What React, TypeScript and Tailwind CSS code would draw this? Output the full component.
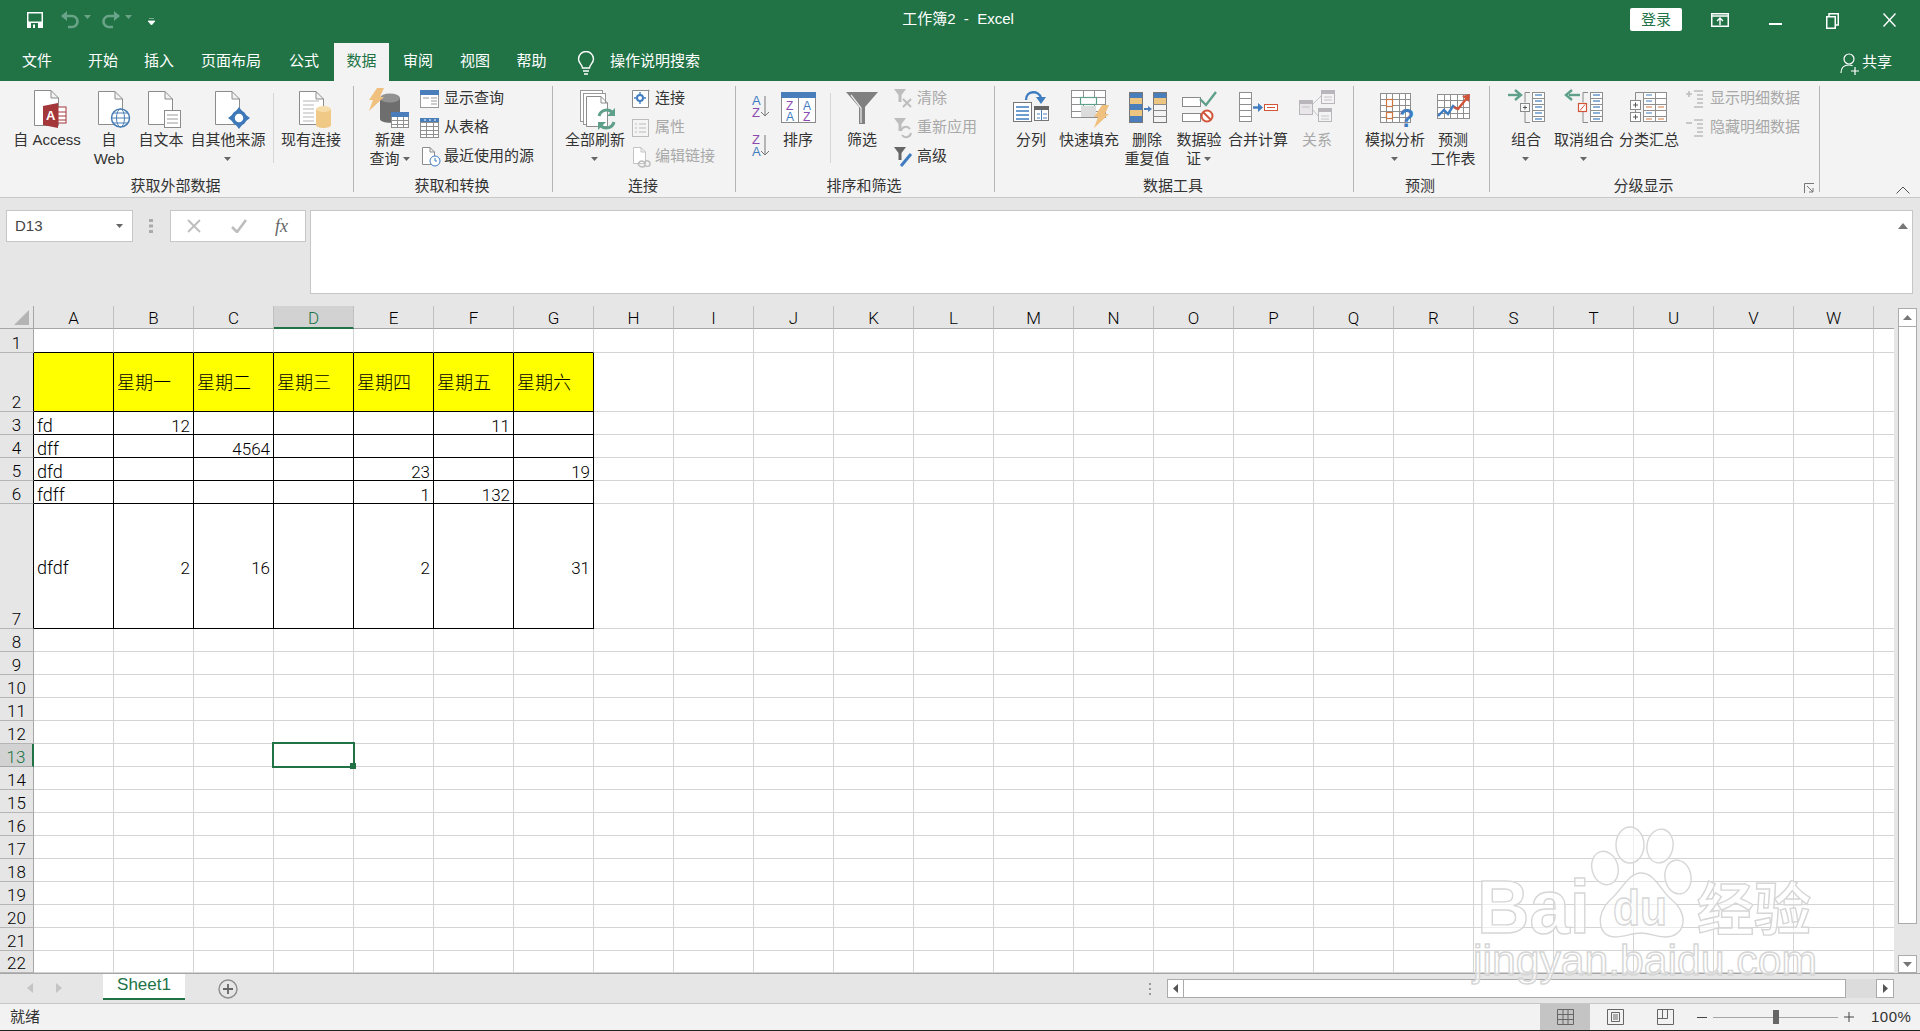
import type { ReactNode } from 'react';

const cjk = "font-['Liberation_Sans','Noto_Sans_CJK_SC',sans-serif]";

const Doc = ({ x, y, w, h, f = 8, s = '#8c8c8c' }: { x: number; y: number; w: number; h: number; f?: number; s?: string }) => (
  <path
    d={`M${x + 0.5} ${y + 0.5}H${x + w - f}L${x + w - 0.5} ${y + f}V${y + h - 0.5}H${x + 0.5}ZM${x + w - f} ${y + 0.5}V${y + f}H${x + w - 0.5}`}
    fill="#fff"
    stroke={s}
  />
);

const Ic = ({ children }: { children: ReactNode }) => (
  <svg width="50" height="44" viewBox="0 0 50 44" className="block overflow-visible">
    {children}
  </svg>
);

const Sm = ({ children }: { children: ReactNode }) => (
  <svg width="20" height="20" viewBox="0 0 20 20" className="block shrink-0 overflow-visible">
    {children}
  </svg>
);

const Caret = ({ className = '' }: { className?: string }) => (
  <svg width="8" height="4" viewBox="0 0 8 4" className={`inline-block ${className}`}>
    <path d="M0 0h7L3.5 4z" fill="#666" />
  </svg>
);

const Big = ({
  className,
  icon,
  lines,
  caret,
  muted,
}: {
  className: string;
  icon: ReactNode;
  lines: string[];
  caret?: 'inline' | 'below';
  muted?: boolean;
}) => (
  <div className={`${className} shrink-0 flex flex-col items-center ${muted ? 'text-[#a8a8a8]' : ''}`}>
    <div className="h-[44px]">{icon}</div>
    {lines.map((l, i) => (
      <div key={i} className="h-[19px] leading-[19px] whitespace-nowrap">
        {l}
        {caret === 'inline' && i === lines.length - 1 && <Caret className="ml-[3px] mb-[2px]" />}
      </div>
    ))}
    {caret === 'below' && (
      <div className="h-[19px] flex items-center">
        <Caret />
      </div>
    )}
  </div>
);

const Small = ({ icon, label, muted, className = '' }: { icon: ReactNode; label: string; muted?: boolean; className?: string }) => (
  <div className={`h-[29px] flex items-center whitespace-nowrap ${muted ? 'text-[#a8a8a8]' : ''} ${className}`}>
    {icon}
    <span className="ml-[4px]">{label}</span>
  </div>
);

const Group = ({
  className,
  label,
  children,
  labelClass = 'pr-[2px]',
}: {
  className: string;
  label: string;
  children: ReactNode;
  labelClass?: string;
}) => (
  <div className={`${className} shrink-0 h-[106px] flex flex-col border-r border-[#b5b5b5]`}>
    <div className="h-[90px] flex">{children}</div>
    <div className={`h-[16px] leading-[20px] text-center ${labelClass}`}>{label}</div>
  </div>
);

const Sep = ({ className }: { className: string }) => <div className={`${className} w-px h-[70px] mt-[7px] bg-[#d6d6d6] shrink-0`} />;

const Bolt = ({ x, y, c = '#efc07e' }: { x: number; y: number; c?: string }) => (
  <path d={`M${x + 8} ${y}h7l-4 9h4L${x} ${y + 23}l4-11H${x}z`} fill={c} />
);

const GridLines = ({ x, y, w, h, nx, ny, s = '#8f8f8f' }: { x: number; y: number; w: number; h: number; nx: number; ny: number; s?: string }) => (
  <g stroke={s} fill="none">
    <rect x={x + 0.5} y={y + 0.5} width={w - 1} height={h - 1} fill="#fff" />
    {Array.from({ length: nx - 1 }, (_, i) => (
      <path key={i} d={`M${Math.round(x + ((i + 1) * w) / nx) + 0.5} ${y}v${h}`} />
    ))}
    {Array.from({ length: ny - 1 }, (_, i) => (
      <path key={i} d={`M${x} ${Math.round(y + ((i + 1) * h) / ny) + 0.5}h${w}`} />
    ))}
  </g>
);

const Funnel = ({ c }: { c: string }) => (
  <path d="M1 0h12L8.5 6v7h-3V6z" fill={c} />
);

const OutlineCol = ({ x }: { x: number }) => (
  <g>
    <GridLines x={x} y={6} w={13} h={30} nx={1} ny={5} />
    {[9, 15, 21, 27, 33].map((y) => (
      <path key={y} d={`M${x + 3} ${y}h7`} stroke="#3f7cc0" strokeWidth="1.2" />
    ))}
  </g>
);

const Access = (
  <Ic>
    <Doc x={12} y={4} w={25} h={36} />
    <rect x="36" y="21" width="8" height="16" fill="#fff" stroke="#a4373a" />
    <path d="M36 26h8M36 30h8M36 34h8" stroke="#a4373a" />
    <path d="M21 20L36 17V42L21 39Z" fill="#a4373a" />
    <text x="24" y="34" fontSize="13" fontWeight="700" fill="#fff">A</text>
  </Ic>
);
const Web = (
  <Ic>
    <Doc x={14} y={5} w={25} h={34} />
    <circle cx="36.5" cy="32" r="9" fill="#fff" stroke="#4a7fb5" strokeWidth="1.5" />
    <ellipse cx="36.5" cy="32" rx="4" ry="9" fill="none" stroke="#4a7fb5" />
    <path d="M27.5 32h18M29 27h15M29 37h15" stroke="#4a7fb5" />
  </Ic>
);
const TextDoc = (
  <Ic>
    <Doc x={12} y={5} w={25} h={34} />
    <rect x="28.5" y="24.5" width="16" height="17" fill="#fff" stroke="#8c8c8c" />
    <path d="M31 29h11M31 33h11M31 37h11" stroke="#9a9a9a" />
  </Ic>
);
const Other = (
  <Ic>
    <Doc x={12} y={5} w={25} h={34} />
    <path d="M36 21l3 4h-6zM36 43l-3-4h6zM25 32l4-3v6zM47 32l-4-3v6z" fill="#3d78b8" />
    <circle cx="36" cy="32" r="6" fill="#fff" stroke="#3d78b8" strokeWidth="3.5" />
  </Ic>
);
const Existing = (
  <Ic>
    <Doc x={13} y={5} w={25} h={34} />
    <path d="M17 15h16M17 19h11M17 23h11M17 27h11M17 31h11M17 35h11" stroke="#b5b5b5" />
    <path d="M30 23v16c0 4 15 4 15 0V23z" fill="#f0c987" />
    <ellipse cx="37.5" cy="23" rx="7.5" ry="3" fill="#f6dca9" />
  </Ic>
);
const NewQuery = (
  <Ic>
    <path d="M15 12v21c0 5 20 5 20 0V12z" fill="#6e6e6e" />
    <ellipse cx="25" cy="12" rx="10" ry="4.5" fill="#929292" />
    <Bolt x={4} y={2} />
    <GridLines x={26} y={26} w={18} h={16} nx={3} ny={4} />
    <rect x="26" y="26" width="18" height="5" fill="#4a7ebb" />
  </Ic>
);
const Refresh = (
  <Ic>
    <rect x="10.5" y="4.5" width="22" height="31" fill="#fff" stroke="#999" />
    <rect x="13.5" y="7.5" width="22" height="31" fill="#fff" stroke="#999" />
    <Doc x={16} y={10} w={22} h={31} f={7} />
    <path d="M29 30a8 8 0 0 1 13-4" fill="none" stroke="#5fa08a" strokeWidth="3" />
    <path d="M45 22v8h-8z" fill="#5fa08a" />
    <path d="M44 36a8 8 0 0 1-13 4" fill="none" stroke="#5fa08a" strokeWidth="3" />
    <path d="M28 44v-8h8z" fill="#5fa08a" />
  </Ic>
);
const SortBig = (
  <Ic>
    <rect x="8.5" y="6.5" width="34" height="30" fill="#fff" stroke="#8a8a8a" />
    <path d="M25.5 11v26" stroke="#8a8a8a" />
    <rect x="8" y="6" width="35" height="6" fill="#4a7ebb" />
    <text x="13" y="24" fontSize="12" fill="#8b4bb0">Z</text>
    <text x="30" y="24" fontSize="12" fill="#3f7cc0">A</text>
    <text x="13" y="35" fontSize="12" fill="#3f7cc0">A</text>
    <text x="30" y="35" fontSize="12" fill="#8b4bb0">Z</text>
  </Ic>
);
const FilterBig = (
  <Ic>
    <path d="M9 6h32L28 21v17h-6V21z" fill="#808080" />
    <path d="M14 9l10 13v15" fill="none" stroke="#e8e8e8" strokeWidth="1.3" />
  </Ic>
);
const Columns = (
  <Ic>
    <rect x="7.5" y="16.5" width="18" height="19" fill="#fff" stroke="#777" />
    <path d="M10 21h13M10 25h13M10 29h13M10 33h13" stroke="#3f7cc0" strokeWidth="1.3" />
    <rect x="28.5" y="20.5" width="14" height="14" fill="#fff" stroke="#777" />
    <rect x="28" y="20" width="15" height="4" fill="#666" />
    <path d="M35.5 24v10M31 28h3M37 28h4M31 32h3M37 32h4" stroke="#4a7ebb" />
    <path d="M20 14c0-10 13-10 15-2" fill="none" stroke="#3f7cc0" strokeWidth="2.4" />
    <path d="M30 11h10l-5 7z" fill="#3f7cc0" />
  </Ic>
);
const FlashFill = (
  <Ic>
    <GridLines x={7} y={4} w={35} h={28} nx={3} ny={4} />
    <rect x="16.5" y="11.5" width="16" height="7" fill="#fff" stroke="#5fa08a" strokeWidth="1.2" />
    <rect x="17" y="20" width="15" height="11" fill="#dcdcdc" />
    <Bolt x={30} y={19} />
  </Ic>
);
const Dedupe = (
  <Ic>
    {[6, 12, 18, 24, 30].map((y, i) => (
      <rect key={y} x="7" y={y} width="14" height="6.5" fill={i % 2 ? '#ecc681' : '#4a7ebb'} />
    ))}
    <rect x="7.5" y="6.5" width="13" height="30" fill="none" stroke="#777" />
    <path d="M22 23h5" stroke="#4a7ebb" strokeWidth="2" />
    <path d="M26 20l4 3-4 3z" fill="#4a7ebb" />
    <rect x="31" y="6" width="14" height="6.5" fill="#4a7ebb" />
    <rect x="31" y="12" width="14" height="6.5" fill="#ecc681" />
    <rect x="31.5" y="6.5" width="13" height="30" fill="none" stroke="#777" />
    <path d="M31 18.5h14M31 24.5h14M31 30.5h14" stroke="#888" />
  </Ic>
);
const Validate = (
  <Ic>
    <rect x="8.5" y="11.5" width="18" height="9" fill="#fff" stroke="#8a8a8a" />
    <rect x="8.5" y="27.5" width="18" height="8" fill="#fff" stroke="#8a8a8a" />
    <path d="M26 13l6 6 10-13" fill="none" stroke="#5fa08a" strokeWidth="2.4" />
    <circle cx="33" cy="30" r="5.5" fill="#fff" stroke="#d2553a" strokeWidth="2" />
    <path d="M29 26l8 8" stroke="#d2553a" strokeWidth="2" />
  </Ic>
);
const Consolidate = (
  <Ic>
    <GridLines x={6} y={6} w={13} h={30} nx={1} ny={5} />
    <path d="M20 21.5h6" stroke="#3f7cc0" strokeWidth="2.4" />
    <path d="M25 17l5 4.5-5 4.5z" fill="#3f7cc0" />
    <rect x="31.5" y="18.5" width="13" height="6" fill="#fff" stroke="#d2553a" />
    <path d="M34 21.5h8" stroke="#d2553a" />
  </Ic>
);
const Relations = (
  <Ic>
    <rect x="7.5" y="14.5" width="13" height="14" fill="#e8e6e9" stroke="#b8b6ba" />
    <rect x="7" y="14" width="14" height="4" fill="#b8b6ba" />
    <rect x="29.5" y="4.5" width="13" height="13" fill="#f4f3f4" stroke="#b8b6ba" />
    <rect x="29" y="4" width="14" height="4" fill="#b8b6ba" />
    <rect x="26.5" y="22.5" width="13" height="13" fill="#f4f3f4" stroke="#b8b6ba" />
    <rect x="26" y="22" width="14" height="4" fill="#b8b6ba" />
    <path d="M21 18l8-8M21 24l5 6M10 21h8M32 11h8M32 14h8M29 30h8M29 33h8" stroke="#c4c2c6" />
  </Ic>
);
const WhatIf = (
  <Ic>
    <GridLines x={10} y={7} w={31} h={30} nx={5} ny={5} />
    <rect x="16.5" y="13.5" width="6" height="7" fill="#fff" stroke="#d2763f" strokeWidth="1.2" />
    <rect x="16.5" y="26.5" width="6" height="6" fill="#fff" stroke="#d2763f" strokeWidth="1.2" />
    <text x="29" y="41" fontSize="25" fontWeight="700" fill="#3f7cc0">?</text>
  </Ic>
);
const Forecast = (
  <Ic>
    <GridLines x={9} y={8} w={33} h={25} nx={5} ny={4} />
    <path d="M10 30l6-6 4 4 5-8 4 3" fill="none" stroke="#3f7cc0" strokeWidth="2.4" />
    <path d="M26 21l4 2 9-11" fill="none" stroke="#d2553a" strokeWidth="2.4" />
    <path d="M34 10l8-2-1 8z" fill="#d2553a" />
  </Ic>
);
const GroupIc = (
  <Ic>
    <path d="M7 9h11" stroke="#5fa08a" strokeWidth="2.4" />
    <path d="M14 4l6 5-6 5" fill="none" stroke="#5fa08a" strokeWidth="2.4" />
    <path d="M29 6.5h-5v10M24 26v10.5h5" fill="none" stroke="#8a8a8a" />
    <rect x="19.5" y="17.5" width="9" height="8" fill="#f8f8f8" stroke="#8a8a8a" />
    <path d="M22 21.5h4M24 19.5v4" stroke="#555" />
    <OutlineCol x={31} />
  </Ic>
);
const Ungroup = (
  <Ic>
    <path d="M10 9h11" stroke="#5fa08a" strokeWidth="2.4" />
    <path d="M13 4L7 9l6 5" fill="none" stroke="#5fa08a" strokeWidth="2.4" />
    <path d="M29 6.5h-5v10M24 26v10.5h5" fill="none" stroke="#8a8a8a" />
    <rect x="19.5" y="17.5" width="8" height="8" fill="#fff" stroke="#d2553a" strokeWidth="1.2" />
    <path d="M21 24.5l5-6" stroke="#d2553a" />
    <OutlineCol x={31} />
  </Ic>
);
const Subtotal = (
  <Ic>
    <GridLines x={19} y={6} w={24} h={30} nx={2} ny={5} />
    <path d="M19 6.5h-7.5V14M11.5 23v3" fill="none" stroke="#8a8a8a" />
    <rect x="6.5" y="14.5" width="10" height="9" fill="#fff" stroke="#8a8a8a" />
    <path d="M9 19h5M11.5 16.5v5" stroke="#555" />
    <rect x="6.5" y="26.5" width="10" height="9" fill="#fff" stroke="#8a8a8a" />
    <path d="M9 31h5M11.5 28.5v5" stroke="#555" />
    <path d="M22 9h6M22 15h6M22 27h6" stroke="#3f7cc0" strokeWidth="1.2" />
    <path d="M22 21h6M34 21h6M22 33h6M34 33h6" stroke="#d2763f" strokeWidth="1.2" />
  </Ic>
);

const data: Record<string, string> = {
  B2: '星期一', C2: '星期二', D2: '星期三', E2: '星期四', F2: '星期五', G2: '星期六',
  A3: 'fd', B3: '12', F3: '11',
  A4: 'dff', C4: '4564',
  A5: 'dfd', E5: '23', G5: '19',
  A6: 'fdff', E6: '1', F6: '132',
  A7: 'dfdf', B7: '2', C7: '16', E7: '2', G7: '31',
};

const columns = 'ABCDEFGHIJKLMNOPQRSTUVW'.split('');
const rows = Array.from({ length: 22 }, (_, i) => i + 1);
const gridFont = "font-['Roboto','Noto_Sans_CJK_SC',sans-serif] font-light text-[17px] text-black";

function Sheet() {
  return (
    <div className="relative w-[1894px] h-[667px] overflow-hidden shrink-0">
      <div className={`grid grid-cols-[34px_repeat(23,80px)_20px] ${gridFont}`}>
        <div className="h-[23px] bg-[#e6e6e6] border-r border-b border-[#a6a6a6] flex items-end justify-end">
          <svg width="16" height="16" viewBox="0 0 16 16" className="mr-[3px] mb-[2px]">
            <path d="M15 0v15H0z" fill="#b4b4b4" />
          </svg>
        </div>
        {columns.map((c) =>
          c === 'D' ? (
            <div key={c} className="h-[23px] leading-[24px] text-center bg-[#d2d2d2] text-[#217346] border-r border-[#c0c0c0] border-b-2 border-b-[#217346]">
              {c}
            </div>
          ) : (
            <div key={c} className="h-[23px] leading-[24px] text-center bg-[#e6e6e6] border-r border-b border-r-[#c0c0c0] border-b-[#a6a6a6]">
              {c}
            </div>
          ),
        )}
        <div className="h-[23px] bg-[#e6e6e6] border-b border-[#a6a6a6]" />
        {rows.flatMap((r) => {
          const h = r === 1 ? 'h-[24px]' : r === 2 ? 'h-[59px]' : r === 7 ? 'h-[125px]' : r === 22 ? 'h-[22px]' : 'h-[23px]';
          const inTable = r >= 2 && r <= 7;
          const cells = columns.map((c, i) => {
            const key = `${c}${r}`;
            const v = data[key];
            const numeric = !!v && /^\d/.test(v);
            const border = inTable && i < 7 ? 'border-r border-b border-black' : r === 1 && i < 7 ? 'border-r border-b border-r-[#d4d4d4] border-b-black' : 'border-r border-b border-[#d4d4d4]';
            const bg = r === 2 && i < 7 ? 'bg-[#ffff00]' : 'bg-white';
            const align = numeric ? 'justify-end pr-[3px]' : 'justify-start pl-[3px] text-[18px]';
            const valign = r === 2 ? 'items-center pt-[2px]' : r === 7 ? 'items-center pt-[4px]' : 'items-end';
            return (
              <div key={key} className={`${h} ${border} ${bg} ${align} ${valign} flex leading-[16px] whitespace-nowrap`}>
                {v}
              </div>
            );
          });
          return [
            <div
              key={`h${r}`}
              className={
                r === 13
                  ? `${h} bg-[#d2d2d2] text-[#217346] border-r-2 border-r-[#217346] border-b border-b-[#a6a6a6] flex items-end justify-center leading-[18px]`
                  : inTable
                    ? `${h} bg-[#e6e6e6] border-r border-r-black border-b border-b-[#b5b5b5] flex items-end justify-center leading-[18px]`
                    : `${h} bg-[#e6e6e6] border-r border-r-[#a6a6a6] border-b border-b-[#b5b5b5] flex items-end justify-center leading-[18px]`
              }
            >
              {r}
            </div>,
            ...cells,
            <div key={`x${r}`} className={`${h} bg-white border-b border-[#d4d4d4]`} />,
          ];
        })}
      </div>
      {/* selected cell */}
      <div className="absolute left-[272px] top-[436px] w-[83px] h-[26px] border-2 border-[#217346]">
        <div className="absolute -right-[3px] -bottom-[3px] w-[6px] h-[6px] bg-[#217346]" />
      </div>
    </div>
  );
}

function Watermark() {
  return (
    <svg
      viewBox="1460 820 370 180"
      className={`absolute left-[1460px] top-[820px] w-[370px] h-[180px] pointer-events-none ${cjk}`}
    >
      <g fill="#fff" fillOpacity="0.6" stroke="#d6d6d6" strokeWidth="1.4">
        <ellipse cx="1630" cy="845" rx="14" ry="18" />
        <ellipse cx="1660" cy="846" rx="13" ry="17" transform="rotate(10 1660 846)" />
        <ellipse cx="1605" cy="868" rx="13" ry="17" transform="rotate(-15 1605 868)" />
        <ellipse cx="1678" cy="877" rx="13" ry="17" transform="rotate(-10 1678 877)" />
        <path d="M1641 873C1655 873 1660 890 1672 900C1690 915 1685 937 1665 937C1655 937 1650 933 1641 933C1632 933 1625 937 1615 937C1598 937 1595 915 1610 900C1622 890 1628 873 1641 873Z" />
        <text x="1477" y="933" fontSize="76" fontWeight="700" textLength="113" lengthAdjust="spacingAndGlyphs">Bai</text>
        <text x="1613" y="925" fontSize="50" fontWeight="700" textLength="54" lengthAdjust="spacingAndGlyphs">du</text>
        <text x="1697" y="930" fontSize="57" fontWeight="700">经验</text>
        <text x="1473" y="975" fontSize="42" textLength="344" lengthAdjust="spacingAndGlyphs">jingyan.baidu.com</text>
      </g>
    </svg>
  );
}

export default function App() {
  const tabs = [
    { t: '文件', w: 'w-[74px]' },
    { t: '开始', w: 'w-[58px]' },
    { t: '插入', w: 'w-[54px]' },
    { t: '页面布局', w: 'w-[90px]' },
    { t: '公式', w: 'w-[56px]' },
  ];
  const tabs2 = [
    { t: '审阅', w: 'w-[58px]' },
    { t: '视图', w: 'w-[56px]' },
    { t: '帮助', w: 'w-[57px]' },
  ];
  return (
    <div className={`relative w-[1920px] h-[1031px] overflow-hidden flex flex-col text-[15px] text-[#333] bg-[#e6e6e6] ${cjk}`}>
      {/* title bar */}
      <div className="h-[43px] bg-[#217346] flex text-white shrink-0">
        <div className="w-[300px] flex items-center h-[40px] pl-[27px]">
          <svg width="16" height="16" viewBox="0 0 16 16">
            <path d="M0 0h16v16H0z" fill="#fff" />
            <rect x="1.5" y="1.5" width="13" height="8" fill="#217346" />
            <rect x="4" y="11" width="7" height="5" fill="#217346" />
            <rect x="6" y="12.5" width="2" height="3.5" fill="#fff" />
          </svg>
          <svg width="20" height="18" viewBox="0 0 20 18" className="ml-[17px]">
            <path d="M4 5h8a5 5 0 0 1 0 11H8" fill="none" stroke="#6aa488" strokeWidth="2.6" />
            <path d="M7 0v10L1 5z" fill="#6aa488" />
          </svg>
          <svg width="7" height="4" viewBox="0 0 7 4" className="ml-[4px] mb-[6px]">
            <path d="M0 0h7L3.5 4z" fill="#6aa488" />
          </svg>
          <svg width="20" height="18" viewBox="0 0 20 18" className="ml-[10px]">
            <path d="M16 5H8a5 5 0 0 0 0 11h4" fill="none" stroke="#6aa488" strokeWidth="2.6" />
            <path d="M13 0v10l6-5z" fill="#6aa488" />
          </svg>
          <svg width="7" height="4" viewBox="0 0 7 4" className="ml-[4px] mb-[6px]">
            <path d="M0 0h7L3.5 4z" fill="#6aa488" />
          </svg>
          <svg width="7" height="8" viewBox="0 0 7 8" className="ml-[16px] mt-[3px]">
            <path d="M1 0h5M0 3h7L3.5 7z" stroke="#fff" strokeWidth="0.8" fill="#fff" />
          </svg>
        </div>
        <div className="flex-1 text-center h-[38px] leading-[38px]">工作簿2&nbsp;&nbsp;-&nbsp;&nbsp;Excel</div>
        <div className="w-[304px] flex items-start">
          <div className="ml-[14px] mt-[8px] w-[52px] h-[23px] bg-white rounded-[2px] text-[#217346] text-center leading-[23px]">登录</div>
          <svg width="18" height="14" viewBox="0 0 18 14" className="ml-[29px] mt-[13px]">
            <rect x="0.75" y="0.75" width="16.5" height="12.5" fill="none" stroke="#fff" strokeWidth="1.5" />
            <path d="M1 3h16" stroke="#fff" strokeWidth="1.5" />
            <path d="M9 12V6M6 8l3-3 3 3" fill="none" stroke="#fff" strokeWidth="1.4" />
          </svg>
          <div className="ml-[40px] mt-[23px] w-[13px] h-[2px] bg-white" />
          <svg width="13" height="16" viewBox="0 0 13 16" className="ml-[44px] mt-[13px]">
            <rect x="0.75" y="3.75" width="8.5" height="11.5" fill="#217346" stroke="#fff" strokeWidth="1.5" />
            <path d="M3 3V0.75h9.25V12H10" fill="none" stroke="#fff" strokeWidth="1.5" />
          </svg>
          <svg width="13" height="14" viewBox="0 0 13 14" className="ml-[44px] mt-[13px]">
            <path d="M0.5 0.5l12 13M12.5 0.5l-12 13" stroke="#fff" strokeWidth="1.4" />
          </svg>
        </div>
      </div>
      {/* tabs */}
      <div className="h-[38px] bg-[#217346] flex text-white shrink-0">
        {tabs.map((t) => (
          <div key={t.t} className={`${t.w} h-[38px] leading-[36px] text-center shrink-0`}>{t.t}</div>
        ))}
        <div className="w-[55px] ml-[2px] h-[38px] leading-[36px] text-center bg-[#f3f3f3] text-[#217346] shrink-0">数据</div>
        {tabs2.map((t) => (
          <div key={t.t} className={`${t.w} h-[38px] leading-[36px] text-center shrink-0`}>{t.t}</div>
        ))}
        <svg width="20" height="26" viewBox="0 0 20 26" className="ml-[16px] mt-[8px] shrink-0">
          <path d="M6.5 17c0-3-4-5-4-9a7.5 7.5 0 0 1 15 0c0 4-4 6-4 9z" fill="none" stroke="#fff" strokeWidth="1.4" />
          <path d="M7 20h6M8 23h4" stroke="#fff" strokeWidth="1.6" />
        </svg>
        <div className="ml-[14px] h-[38px] leading-[36px] whitespace-nowrap">操作说明搜索</div>
        <div className="ml-auto mr-[28px] flex h-[38px] items-center whitespace-nowrap">
          <svg width="20" height="22" viewBox="0 0 20 22" className="mr-[2px] mt-[3px]">
            <circle cx="9" cy="6" r="5" fill="none" stroke="#fff" strokeWidth="1.2" />
            <path d="M1 20c0-5 3-8 8-8 1.5 0 2.5.3 3.5.8" fill="none" stroke="#fff" strokeWidth="1.2" />
            <path d="M11 18h8M15 14v8" stroke="#fff" strokeWidth="1.2" />
          </svg>
          <span>共享</span>
        </div>
      </div>
      {/* ribbon */}
      <div className="h-[117px] bg-[#f3f3f3] border-b border-[#c8c8c8] flex pt-[5px] relative shrink-0">
        <Group className="w-[354px]" label="获取外部数据">
          <div className="w-[8px] shrink-0" />
          <Big className="w-[78px]" icon={Access} lines={['自 Access']} />
          <Big className="w-[46px]" icon={Web} lines={['自', 'Web']} />
          <Big className="w-[58px]" icon={TextDoc} lines={['自文本']} />
          <Big className="w-[76px]" icon={Other} lines={['自其他来源']} caret="below" />
          <Sep className="ml-[7px]" />
          <Big className="w-[62px] ml-[6px]" icon={Existing} lines={['现有连接']} />
        </Group>
        <Group className="w-[199px]" label="获取和转换">
          <Big className="w-[52px] ml-[10px]" icon={NewQuery} lines={['新建', '查询']} caret="inline" />
          <div className="ml-[4px] -mt-[2px]">
            <Small
              label="显示查询"
              icon={
                <Sm>
                  <rect x="0.5" y="1.5" width="18" height="17" fill="#fff" stroke="#999" />
                  <rect x="0" y="1" width="19" height="5" fill="#4a7ebb" />
                  <path d="M3 9h6M11 9h6M11 12h6M11 15h6" stroke="#999" />
                </Sm>
              }
            />
            <Small
              label="从表格"
              icon={
                <Sm>
                  <rect x="0" y="0" width="19" height="5" fill="#4a7ebb" />
                  <GridLines x={0} y={4} w={19} h={16} nx={3} ny={4} />
                  <path d="M4 2h2M9 2h2M14 2h2" stroke="#fff" />
                </Sm>
              }
            />
            <Small
              label="最近使用的源"
              icon={
                <Sm>
                  <Doc x={2} y={0} w={13} h={18} f={5} />
                  <circle cx="15" cy="14" r="5" fill="#fff" stroke="#3f7cc0" />
                  <path d="M15 11v3h2" fill="none" stroke="#3f7cc0" />
                </Sm>
              }
            />
          </div>
        </Group>
        <Group className="w-[183px]" label="连接">
          <Big className="w-[78px] ml-[3px]" icon={Refresh} lines={['全部刷新']} caret="below" />
          <div className="-ml-[3px] -mt-[2px]">
            <Small
              label="连接"
              icon={
                <Sm>
                  <Doc x={1} y={1} w={17} h={18} f={0} />
                  <circle cx="9" cy="9" r="3" fill="#fff" stroke="#3f7cc0" strokeWidth="2" />
                  <path d="M9 3v2M9 13v2M3 9h2M13 9h2" stroke="#3f7cc0" strokeWidth="1.4" />
                </Sm>
              }
            />
            <Small
              muted
              label="属性"
              icon={
                <Sm>
                  <rect x="1.5" y="1.5" width="16" height="17" fill="#f4f4f4" stroke="#bbb" />
                  <path d="M4 6h2M8 6h7M4 10h2M8 10h7M4 14h2M8 14h7" stroke="#bbb" />
                </Sm>
              }
            />
            <Small
              muted
              label="编辑链接"
              icon={
                <Sm>
                  <Doc x={2} y={0} w={13} h={17} f={5} s="#c4c4c4" />
                  <path d="M7 17c2-4 6-4 7 0s-5 4-7 0zM13 16c2-4 6-2 6 1s-4 3-6 1" fill="none" stroke="#bbb" strokeWidth="1.4" />
                </Sm>
              }
            />
          </div>
        </Group>
        <Group className="w-[259px]" label="排序和筛选">
          <div className="w-[20px] ml-[15px] -mt-[2px] shrink-0">
            <div className="h-[39px] flex items-center">
              <svg width="20" height="24" viewBox="0 0 20 24" className="mt-[4px]">
                <text x="1" y="11" fontSize="13" fill="#3f7cc0">A</text>
                <text x="1" y="23" fontSize="13" fill="#8b4bb0">Z</text>
                <path d="M14 2v20M10 18l4 4 4-4" fill="none" stroke="#777" />
              </svg>
            </div>
            <div className="h-[39px] flex items-center">
              <svg width="20" height="24" viewBox="0 0 20 24" className="mt-[4px]">
                <text x="1" y="11" fontSize="13" fill="#8b4bb0">Z</text>
                <text x="1" y="23" fontSize="13" fill="#3f7cc0">A</text>
                <path d="M14 2v20M10 18l4 4 4-4" fill="none" stroke="#777" />
              </svg>
            </div>
          </div>
          <Big className="w-[52px] ml-[1px]" icon={SortBig} lines={['排序']} />
          <Sep className="ml-[6px]" />
          <Big className="w-[56px] ml-[3px]" icon={FilterBig} lines={['筛选']} />
          <div className="ml-[3px] -mt-[2px]">
            <Small
              muted
              label="清除"
              icon={
                <Sm>
                  <Funnel c="#bdbdbd" />
                  <path d="M10 10l8 8M18 10l-8 8" stroke="#bdbdbd" strokeWidth="2" />
                </Sm>
              }
            />
            <Small
              muted
              label="重新应用"
              icon={
                <Sm>
                  <Funnel c="#bdbdbd" />
                  <path d="M8 13a5 5 0 0 1 9-2M18 15a5 5 0 0 1-9 2" fill="none" stroke="#bdbdbd" strokeWidth="2" />
                </Sm>
              }
            />
            <Small
              label="高级"
              icon={
                <Sm>
                  <Funnel c="#666" />
                  <path d="M18 7L8 19" stroke="#3f7cc0" strokeWidth="3" />
                </Sm>
              }
            />
          </div>
        </Group>
        <Group className="w-[359px]" label="数据工具">
          <div className="w-[8px] shrink-0" />
          <Big className="w-[56px]" icon={Columns} lines={['分列']} />
          <Big className="w-[60px]" icon={FlashFill} lines={['快速填充']} />
          <Big className="w-[56px]" icon={Dedupe} lines={['删除', '重复值']} />
          <Big className="w-[48px]" icon={Validate} lines={['数据验', '证']} caret="inline" />
          <Big className="w-[70px]" icon={Consolidate} lines={['合并计算']} />
          <Big className="w-[48px]" icon={Relations} lines={['关系']} muted />
        </Group>
        <Group className="w-[136px]" label="预测" labelClass="pr-[3px]">
          <div className="w-[8px] shrink-0" />
          <Big className="w-[66px]" icon={WhatIf} lines={['模拟分析']} caret="below" />
          <Big className="w-[50px]" icon={Forecast} lines={['预测', '工作表']} />
        </Group>
        <Group className="w-[330px]" label="分级显示" labelClass="pr-[22px]">
          <div className="w-[8px] shrink-0" />
          <Big className="w-[56px]" icon={GroupIc} lines={['组合']} caret="below" />
          <Big className="w-[60px]" icon={Ungroup} lines={['取消组合']} caret="below" />
          <Big className="w-[70px]" icon={Subtotal} lines={['分类汇总']} />
          <div className="ml-[2px] -mt-[2px]">
            <Small
              muted
              label="显示明细数据"
              icon={
                <Sm>
                  <path d="M0 5h6M3 2v6" stroke="#bdbdbd" strokeWidth="1.6" />
                  <path d="M8 2h9M11 6h6M11 10h6M11 14h6M8 18h9" stroke="#bdbdbd" strokeWidth="1.6" />
                </Sm>
              }
            />
            <Small
              muted
              label="隐藏明细数据"
              icon={
                <Sm>
                  <path d="M0 5h6" stroke="#bdbdbd" strokeWidth="1.6" />
                  <path d="M8 2h9M11 6h6M11 10h6M11 14h6M8 18h9" stroke="#bdbdbd" strokeWidth="1.6" />
                </Sm>
              }
            />
          </div>
        </Group>
        {/* dialog launcher + collapse */}
        <svg width="11" height="11" viewBox="0 0 11 11" className="absolute left-[1804px] top-[102px]">
          <path d="M.5 10V.5H10M3 3l6 6M9 5v4H5" fill="none" stroke="#777" />
        </svg>
        <svg width="14" height="8" viewBox="0 0 14 8" className="absolute left-[1896px] top-[105px]">
          <path d="M.5 7.5L7 1l6.5 6.5" fill="none" stroke="#555" />
        </svg>
      </div>
      {/* formula bar */}
      <div className="h-[108px] bg-[#e6e6e6] flex items-start pt-[12px] pl-[6px] shrink-0">
        <div className="w-[127px] h-[32px] bg-white border border-[#c6c6c6] flex items-center justify-between pl-[8px] pr-[8px]">
          <span className="text-[#444]">D13</span>
          <Caret />
        </div>
        <svg width="4" height="14" viewBox="0 0 4 14" className="ml-[16px] mt-[9px] shrink-0">
          <path d="M0 0h4v3H0zM0 5.5h4v3H0zM0 11h4v3H0z" fill="#aaa" />
        </svg>
        <div className="ml-[17px] w-[136px] h-[32px] bg-white border border-[#c6c6c6] flex items-center pl-[16px]">
          <svg width="14" height="14" viewBox="0 0 14 14">
            <path d="M1 1l12 12M13 1L1 13" stroke="#bdbdbd" strokeWidth="1.8" />
          </svg>
          <svg width="16" height="14" viewBox="0 0 16 14" className="ml-[30px]">
            <path d="M1 8l5 5L15 1" fill="none" stroke="#bdbdbd" strokeWidth="2.6" />
          </svg>
          <span className="ml-[28px] font-['Liberation_Serif',serif] italic text-[18px] text-[#666]">fx</span>
        </div>
        <div className="ml-[4px] w-[1603px] h-[84px] bg-white border border-[#c6c6c6] relative">
          <svg width="10" height="6" viewBox="0 0 10 6" className="absolute right-[4px] top-[12px]">
            <path d="M5 0l5 6H0z" fill="#777" />
          </svg>
        </div>
      </div>
      {/* sheet + vertical scrollbar */}
      <div className="flex h-[667px] shrink-0">
        <Sheet />
        <div className="ml-[4px] w-[19px] flex flex-col pt-[2px]">
          <div className="h-[19px] bg-white border border-[#ababab] flex items-center justify-center">
            <svg width="9" height="5" viewBox="0 0 9 5"><path d="M4.5 0L9 5H0z" fill="#777" /></svg>
          </div>
          <div className="h-[597px] bg-white border border-[#ababab] border-t-0" />
          <div className="flex-1" />
          <div className="h-[18px] bg-white border border-[#ababab] flex items-center justify-center">
            <svg width="9" height="5" viewBox="0 0 9 5"><path d="M4.5 5L9 0H0z" fill="#777" /></svg>
          </div>
        </div>
      </div>
      {/* sheet tabs */}
      <div className="h-[30px] bg-[#e6e6e6] border-t border-[#a6a6a6] flex shrink-0">
        <svg width="6" height="10" viewBox="0 0 6 10" className="ml-[27px] mt-[9px]"><path d="M6 0v10L0 5z" fill="#c4c4c4" /></svg>
        <svg width="6" height="10" viewBox="0 0 6 10" className="ml-[23px] mt-[9px]"><path d="M0 0v10l6-5z" fill="#c4c4c4" /></svg>
        <div className="ml-[41px] w-[82px] h-[26px] bg-white border-b-2 border-[#217346] text-[#217346] text-[17px] leading-[22px] text-center">Sheet1</div>
        <svg width="20" height="20" viewBox="0 0 20 20" className="ml-[33px] mt-[5px]">
          <circle cx="10" cy="10" r="9" fill="none" stroke="#8c8c8c" strokeWidth="1.4" />
          <path d="M10 5v10M5 10h10" stroke="#666" strokeWidth="1.8" />
        </svg>
        <svg width="4" height="14" viewBox="0 0 4 14" className="ml-[910px] mt-[8px]">
          <path d="M1 1h2v2H1zM1 6h2v2H1zM1 11h2v2H1z" fill="#999" />
        </svg>
        <div className="ml-[15px] mt-[5px] h-[19px] w-[727px] flex">
          <div className="w-[17px] bg-white border border-[#ababab] flex items-center justify-center">
            <svg width="5" height="9" viewBox="0 0 5 9"><path d="M5 0v9L0 4.5z" fill="#555" /></svg>
          </div>
          <div className="w-[662px] bg-white border border-l-0 border-[#ababab]" />
          <div className="flex-1 bg-[#dcdcdc]" />
          <div className="w-[18px] bg-white border border-[#ababab] flex items-center justify-center">
            <svg width="5" height="9" viewBox="0 0 5 9"><path d="M0 0v9l5-4.5z" fill="#555" /></svg>
          </div>
        </div>
      </div>
      {/* status bar */}
      <div className="h-[28px] bg-[#f2f2f2] border-t border-[#c6c6c6] border-b border-b-[#222] flex items-center shrink-0">
        <span className="ml-[10px] text-[15px]">就绪</span>
        <div className="ml-auto flex items-center">
          <div className="w-[50px] h-[26px] bg-[#c4c4c4] flex items-center justify-center">
            <svg width="17" height="16" viewBox="0 0 17 16">
              <path d="M.5.5h16v15H.5zM6 0v16M11 0v16M0 5.5h17M0 10.5h17" fill="none" stroke="#666" />
            </svg>
          </div>
          <div className="w-[50px] flex items-center justify-center">
            <svg width="17" height="16" viewBox="0 0 17 16">
              <path d="M.5.5h16v15H.5zM4.5 3.5h8v9h-8zM6 6h5M6 8h5M6 10h5" fill="none" stroke="#666" />
            </svg>
          </div>
          <div className="w-[50px] flex items-center justify-center">
            <svg width="17" height="16" viewBox="0 0 17 16">
              <path d="M.5.5h16v15H.5zM.5 9.5h10V.5" fill="none" stroke="#666" />
              <path d="M5.5 0v9" stroke="#666" />
            </svg>
          </div>
          <div className="ml-[7px] w-[10px] h-px bg-[#444]" />
          <div className="ml-[6px] w-[125px] h-px bg-[#a6a6a6] relative">
            <div className="absolute left-[60px] -top-[7px] w-[6px] h-[14px] bg-[#666]" />
          </div>
          <svg width="10" height="10" viewBox="0 0 10 10" className="ml-[6px]">
            <path d="M0 5h10M5 0v10" stroke="#444" />
          </svg>
          <span className="ml-[17px] mr-[11px] w-[38px] text-[15px] tracking-[0.5px] whitespace-nowrap">100%</span>
        </div>
      </div>
      <Watermark />
    </div>
  );
}
